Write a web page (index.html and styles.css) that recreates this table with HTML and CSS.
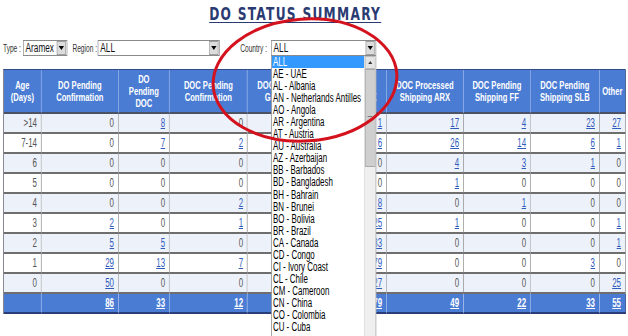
FILE: index.html
```
<!DOCTYPE html>
<html>
<head>
<meta charset="utf-8">
<title>DO Status Summary</title>
<link rel="stylesheet" href="styles.css">
</head>
<body>
<div class="page">
  <h1 class="title">DO STATUS SUMMARY</h1>
  <div class="filters">
    <span class="lbl">Type :</span>
    <div class="sel sel-type"><span class="val">Aramex</span><i class="btn"><b class="tri"></b></i></div>
    <span class="lbl lbl-region">Region :</span>
    <div class="sel sel-region"><span class="val">ALL</span><i class="btn"><b class="tri"></b></i></div>
    <span class="lbl lbl-country">Country :</span>
    <div class="combo">
      <div class="sel sel-country"><span class="val">ALL</span><i class="btn"><b class="tri"></b></i></div>
      <div class="list">
        <ul class="items">
          <li class="on">ALL</li>
          <li>AE - UAE</li>
          <li>AL - Albania</li>
          <li>AN - Netherlands Antilles</li>
          <li>AO - Angola</li>
          <li>AR - Argentina</li>
          <li>AT - Austria</li>
          <li>AU - Australia</li>
          <li>AZ - Azerbaijan</li>
          <li>BB - Barbados</li>
          <li>BD - Bangladesh</li>
          <li>BH - Bahrain</li>
          <li>BN - Brunei</li>
          <li>BO - Bolivia</li>
          <li>BR - Brazil</li>
          <li>CA - Canada</li>
          <li>CD - Congo</li>
          <li>CI - Ivory Coast</li>
          <li>CL - Chile</li>
          <li>CM - Cameroon</li>
          <li>CN - China</li>
          <li>CO - Colombia</li>
          <li>CU - Cuba</li>
        </ul>
        <div class="sbar">
          <div class="sbtn"><b class="up"></b></div>
          <div class="thumb"><span class="grip"></span></div>
        </div>
      </div>
    </div>
  </div>

  <table class="grid">
    <colgroup>
      <col class="c-age"><col class="c1"><col class="c2"><col class="c3"><col class="c4"><col class="c5"><col class="c6"><col class="c7"><col class="c8"><col class="c9">
    </colgroup>
    <thead>
      <tr>
        <th>Age<br>(Days)</th>
        <th>DO Pending<br>Confirmation</th>
        <th>DO<br>Pending<br>DOC</th>
        <th>DOC Pending<br>Confirmation</th>
        <th>DOC Pending<br>Grouping</th>
        <th>DOC Pending<br>Shipping ARX</th>
        <th>DOC Processed<br>Shipping ARX</th>
        <th>DOC Pending<br>Shipping FF</th>
        <th>DOC Pending<br>Shipping SLB</th>
        <th>Other</th>
      </tr>
    </thead>
    <tbody>
      <tr class="alt"><td>&gt;14</td><td>0</td><td><a>8</a></td><td>0</td><td></td><td><a>1</a></td><td><a>17</a></td><td><a>4</a></td><td><a>23</a></td><td><a>27</a></td></tr>
      <tr><td>7-14</td><td>0</td><td><a>7</a></td><td><a>2</a></td><td></td><td><a>6</a></td><td><a>26</a></td><td><a>14</a></td><td><a>6</a></td><td><a>1</a></td></tr>
      <tr class="alt"><td>6</td><td>0</td><td>0</td><td>0</td><td></td><td>0</td><td><a>4</a></td><td><a>3</a></td><td><a>1</a></td><td>0</td></tr>
      <tr><td>5</td><td>0</td><td>0</td><td>0</td><td></td><td>0</td><td><a>1</a></td><td>0</td><td>0</td><td>0</td></tr>
      <tr class="alt"><td>4</td><td>0</td><td>0</td><td><a>2</a></td><td></td><td><a>8</a></td><td>0</td><td><a>1</a></td><td>0</td><td>0</td></tr>
      <tr><td>3</td><td><a>2</a></td><td>0</td><td><a>1</a></td><td></td><td><a>25</a></td><td><a>1</a></td><td>0</td><td>0</td><td><a>1</a></td></tr>
      <tr class="alt"><td>2</td><td><a>5</a></td><td><a>5</a></td><td>0</td><td></td><td><a>33</a></td><td>0</td><td>0</td><td>0</td><td><a>1</a></td></tr>
      <tr><td>1</td><td><a>29</a></td><td><a>13</a></td><td><a>7</a></td><td></td><td><a>79</a></td><td>0</td><td>0</td><td><a>3</a></td><td>0</td></tr>
      <tr class="alt"><td>0</td><td><a>50</a></td><td>0</td><td>0</td><td></td><td><a>27</a></td><td>0</td><td>0</td><td>0</td><td><a>25</a></td></tr>
    </tbody>
    <tfoot>
      <tr><td></td><td><a>86</a></td><td><a>33</a></td><td><a>12</a></td><td></td><td><a>79</a></td><td><a>49</a></td><td><a>22</a></td><td><a>33</a></td><td><a>55</a></td></tr>
    </tfoot>
  </table>
</div>

<svg class="mark" width="628" height="336" viewBox="0 0 628 336">
  <ellipse cx="305" cy="80" rx="92" ry="61" transform="rotate(-4 305 80)" fill="none" stroke="#d3121e" stroke-width="3"/>
</svg>
</body>
</html>
```

FILE: styles.css
```
* { box-sizing: border-box; }

html, body {
  margin: 0;
  padding: 0;
  overflow: hidden;
  background: #ffffff;
}

body {
  width: 628px;
  height: 336px;
  position: relative;
  font-family: "Liberation Sans", Arial, sans-serif;
}

/* the whole sheet is laid out wide and squeezed horizontally */
.page {
  width: 950px;
  height: 336px;
  overflow: hidden;
  padding-left: 4.5px;
  transform: scaleX(0.66);
  transform-origin: 0 0;
}

.title {
  margin: 4px 0 0;
  padding-right: 60px;
  text-align: center;
  font-family: "DejaVu Sans", sans-serif;
  font-weight: bold;
  font-size: 18.5px;
  line-height: 20px;
  letter-spacing: 1.9px;
  color: #2a3a72;
  text-decoration: underline;
  text-underline-offset: 2px;
}

.filters {
  display: flex;
  align-items: center;
  margin-top: 16px;
  height: 16px;
}

.lbl {
  font-size: 10px;
  color: #333333;
  margin-right: 3px;
  white-space: nowrap;
}

.lbl-region { margin-left: 8px; margin-right: 1px; }
.lbl-country { margin-left: 31px; margin-right: 6px; }

.sel {
  display: flex;
  align-items: center;
  height: 16px;
  border: 1px solid #8a8a8a;
  background: #ffffff;
  font-size: 12.5px;
  color: #111111;
}

.sel .val {
  flex: 1;
  padding-left: 3px;
  line-height: 14px;
}

.sel .btn {
  width: 14px;
  height: 14px;
  margin-right: 1px;
  background: #dcdcdc;
  border: 1px solid #a0a0a0;
  display: flex;
  align-items: center;
  justify-content: center;
}

.tri {
  width: 0;
  height: 0;
  border-left: 4px solid transparent;
  border-right: 4px solid transparent;
  border-top: 4px solid #000000;
}

.sel-type { width: 67px; }
.sel-region { width: 185px; }

.combo {
  position: relative;
  width: 159px;
}

.sel-country { width: 159px; }

.list {
  position: absolute;
  top: 16px;
  left: 0;
  width: 159px;
  height: 282px;
  z-index: 5;
  display: flex;
  background: #ffffff;
  border: 1px solid #7a7a7a;
  border-top: none;
  border-bottom: none;
  overflow: hidden;
}

.items {
  flex: 1;
  margin: 0;
  padding: 0;
  list-style: none;
  font-size: 12px;
  line-height: 12.05px;
  color: #000000;
}

.items li {
  padding-left: 2px;
  white-space: nowrap;
}

.items li.on {
  background: #3399ff;
  color: #ffffff;
}

.sbar {
  width: 17px;
  background: #efefef;
  border-left: 1px solid #d8d8d8;
  display: flex;
  flex-direction: column;
}

.sbtn {
  height: 13px;
  background: #e4e4e4;
  border: 1px solid #bdbdbd;
  display: flex;
  align-items: center;
  justify-content: center;
}

.up {
  width: 0;
  height: 0;
  border-left: 3px solid transparent;
  border-right: 3px solid transparent;
  border-bottom: 3px solid #333333;
}

.thumb {
  height: 98px;
  background: #cfcfcf;
  border: 1px solid #a9a9a9;
  display: flex;
  align-items: center;
  justify-content: center;
}

.grip {
  width: 7px;
  height: 5px;
  border-top: 1px solid #777777;
  border-bottom: 1px solid #777777;
}

/* table */
.grid {
  margin-top: 13px;
  width: 942.5px;
  table-layout: fixed;
  border-collapse: separate;
  border-spacing: 0;
  border-top: 1px solid #2f4a86;
  border-left: 1px solid #4a4a58;
}

.c-age { width: 57.6px; }
.c1 { width: 116.7px; }
.c2 { width: 77.3px; }
.c3 { width: 118.2px; }
.c4 { width: 104.5px; }
.c5 { width: 106.1px; }
.c6 { width: 116.7px; }
.c7 { width: 101.5px; }
.c8 { width: 104.5px; }
.c9 { width: 39.4px; }

.grid th {
  background: #4a7cd4;
  color: #ffffff;
  font-weight: bold;
  font-size: 11.5px;
  line-height: 12px;
  padding: 3px 2px;
  height: 44px;
  text-align: center;
  vertical-align: middle;
  border-right: 1px solid #a9c1ee;
  border-bottom: 2px solid #4c5266;
}

.grid th:last-child { border-right: 1px solid #3c4a70; }

.grid td {
  font-size: 12px;
  line-height: 18px;
  color: #555555;
  text-align: right;
  padding: 0 6px 0 0;
  border-right: 1px solid #858585;
  border-bottom: 2px solid #6e6e6e;
  white-space: nowrap;
}

.grid tbody tr.alt td { background: #edf1f9; }

.grid a {
  color: #2f5bbd;
  text-decoration: underline;
}

.grid tfoot td {
  background: #4a7cd4;
  border-right: 1px solid #c3d3f3;
  border-bottom: 2px solid #2b3d78;
  font-weight: bold;
}

.grid tfoot td:last-child { border-right: 1px solid #2b3d78; }

.grid tfoot a { color: #ffffff; }

.mark {
  position: absolute;
  top: 0;
  left: 0;
  pointer-events: none;
  z-index: 10;
}
```
